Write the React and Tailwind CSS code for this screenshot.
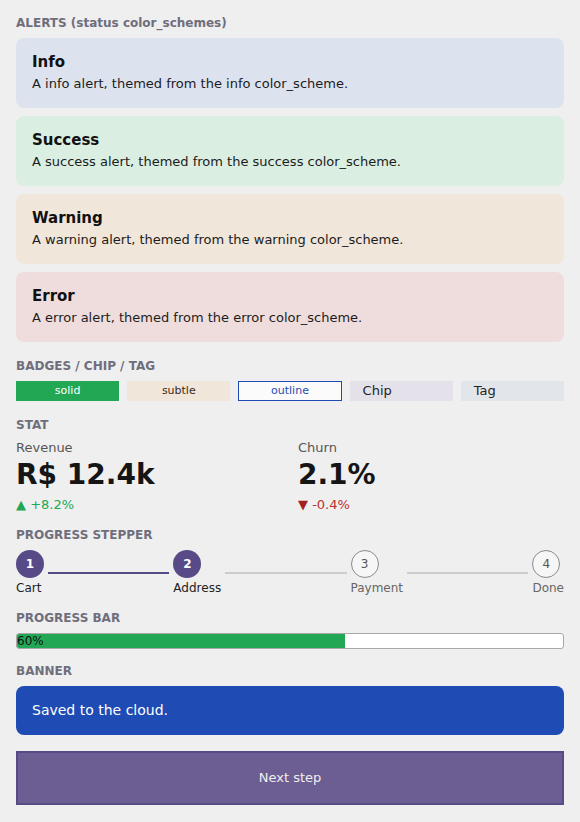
const alerts = [
  { title: 'Info', scheme: 'info', bg: 'bg-[#dce3ef]' },
  { title: 'Success', scheme: 'success', bg: 'bg-[#dbeee2]' },
  { title: 'Warning', scheme: 'warning', bg: 'bg-[#f1e6da]' },
  { title: 'Error', scheme: 'error', bg: 'bg-[#efdddd]' },
]

const steps = ['Cart', 'Address', 'Payment', 'Done']
const current = 1

function Heading({ children }) {
  return <h3 className="text-[12px] font-bold text-[#6e6e7c] leading-4 mb-[7px]">{children}</h3>
}

function Step({ n, label, done }) {
  return (
    <div className="flex flex-col items-start">
      {done ? (
        <div className="w-7 h-7 rounded-full bg-[#574a87] text-white text-[12px] font-bold flex items-center justify-center">{n}</div>
      ) : (
        <div className="w-7 h-7 rounded-full bg-[#f6f6f6] border border-[#8a8a8a] text-[#555] text-[12px] flex items-center justify-center">{n}</div>
      )}
      <span className={`text-[12px] leading-4 mt-[2px] ${done ? 'text-[#222]' : 'text-[#666]'}`}>{label}</span>
    </div>
  )
}

export default function App() {
  const stepper = []
  steps.forEach((s, i) => {
    stepper.push(<Step key={s} n={i + 1} label={s} done={i <= current} />)
    if (i < steps.length - 1) {
      stepper.push(
        <div key={s + '-line'} className={`flex-1 h-[2px] mx-1 ${i < current ? 'bg-[#574a87]' : 'bg-[#cccccc]'}`} />
      )
    }
  })

  return (
    <div className="min-h-screen bg-[#efefef] px-4 pt-[15px] pb-4 font-['DejaVu_Sans',sans-serif]">
      {/* alerts */}
      <section>
        <Heading>ALERTS (status color_schemes)</Heading>
        <div className="flex flex-col gap-2">
          {alerts.map((a) => (
            <div key={a.title} className={`${a.bg} rounded-lg px-4 pt-[14px] h-[70px]`}>
              <div className="text-[15px] font-bold text-[#111] leading-5">{a.title}</div>
              <p className="text-[13px] text-[#1c1c1c] leading-[18px] mt-[3px]">
                A {a.scheme} alert, themed from the {a.scheme} color_scheme.
              </p>
            </div>
          ))}
        </div>
      </section>

      {/* badges */}
      <section className="mt-4">
        <Heading>BADGES / CHIP / TAG</Heading>
        <div className="grid grid-cols-5 gap-2">
          <span className="h-5 bg-[#22a755] text-white text-[11px] flex items-center justify-center">solid</span>
          <span className="h-5 bg-[#f0e6da] text-[#3a2a1c] text-[11px] flex items-center justify-center">subtle</span>
          <span className="h-5 bg-[#fbfbfb] border border-[#1e4bb4] text-[#1e4bb4] text-[11px] flex items-center justify-center">outline</span>
          <span className="h-5 bg-[#e4e1ea] text-[#222] text-[13px] flex items-center pl-[13px]">Chip</span>
          <span className="h-5 bg-[#e2e6ea] text-[#222] text-[13px] flex items-center pl-[13px]">Tag</span>
        </div>
      </section>

      {/* stat */}
      <section className="mt-4">
        <Heading>STAT</Heading>
        <div className="grid grid-cols-2 gap-4">
          <div>
            <div className="text-[13px] text-[#555] leading-4">Revenue</div>
            <div className="text-[28px] font-bold text-[#151515] leading-9 mt-[1px]">R$ 12.4k</div>
            <div className="text-[13px] text-[#22a755] leading-4 mt-[4px]">▲ +8.2%</div>
          </div>
          <div>
            <div className="text-[13px] text-[#555] leading-4">Churn</div>
            <div className="text-[28px] font-bold text-[#151515] leading-9 mt-[1px]">2.1%</div>
            <div className="text-[13px] text-[#b83232] leading-4 mt-[4px]">
              <span className="text-[#a32020]">▼</span> -0.4%
            </div>
          </div>
        </div>
      </section>

      {/* stepper */}
      <section className="mt-[14px]">
        <Heading>PROGRESS STEPPER</Heading>
        <div className="flex items-center">{stepper}</div>
      </section>

      {/* progress bar */}
      <section className="mt-[14px]">
        <Heading>PROGRESS BAR</Heading>
        <div className="h-4 bg-white border border-[#a8a8a8] rounded-[3px] overflow-hidden">
          <div className="h-full bg-[#22a755] text-[12px] text-[#111] leading-[14px]" style={{ width: '60%' }}>60%</div>
        </div>
      </section>

      {/* banner */}
      <section className="mt-[14px]">
        <Heading>BANNER</Heading>
        <div className="bg-[#1e4bb4] rounded-lg h-[49px] px-4 flex items-center text-white text-[14px]">
          Saved to the cloud.
        </div>
      </section>

      <button className="mt-4 w-full h-[54px] bg-[#6c5e93] border-2 border-[#574a87] text-[#eeeeee] text-[13px]">
        Next step
      </button>
    </div>
  )
}
